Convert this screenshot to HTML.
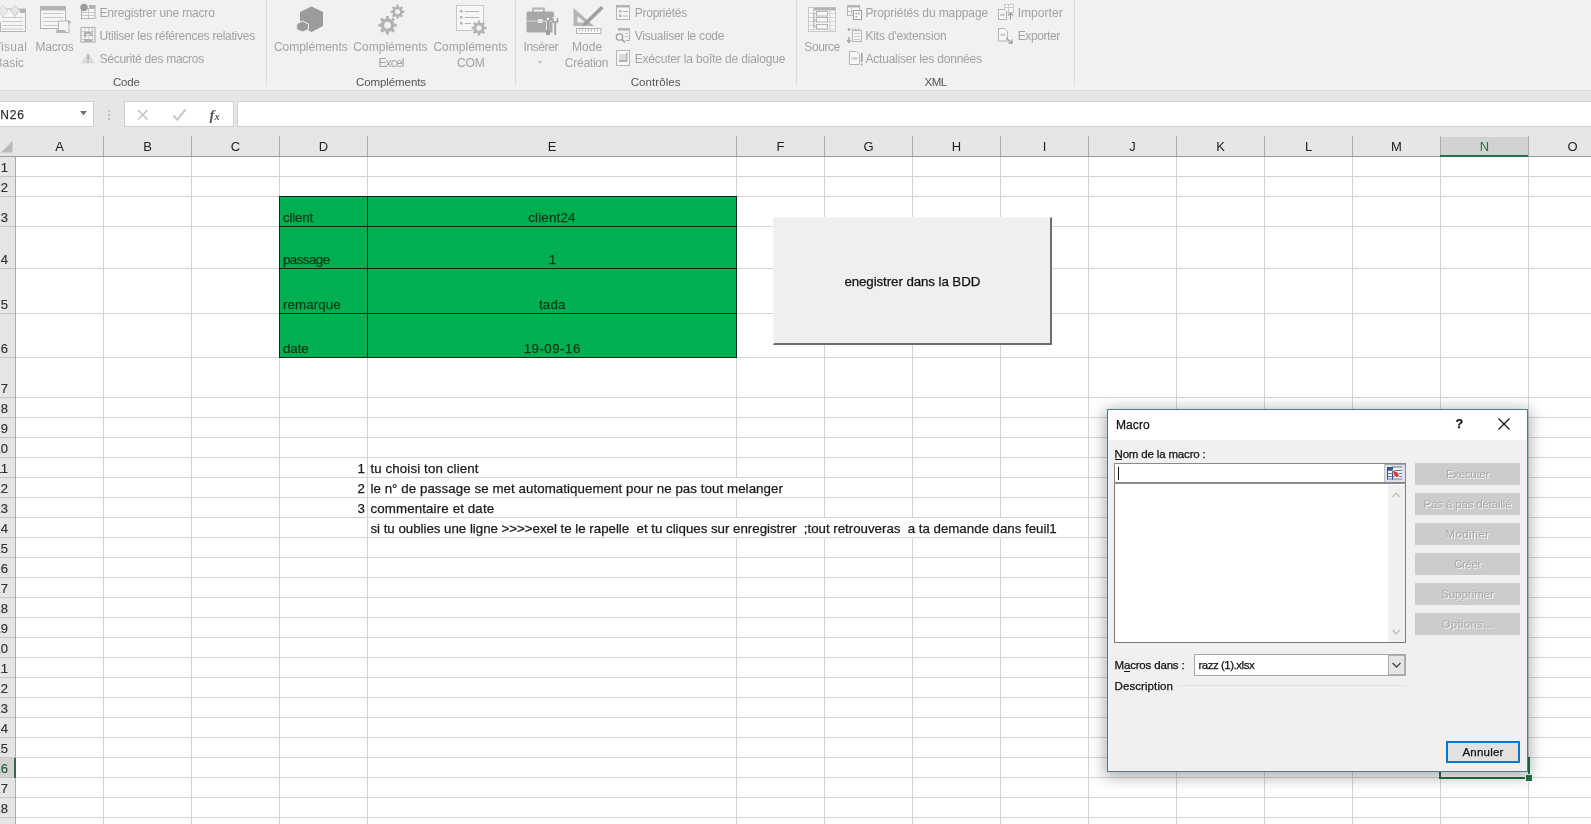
<!DOCTYPE html>
<html lang="fr"><head><meta charset="utf-8"><title>Macro</title>
<style>
html,body{margin:0;padding:0}
body{will-change:transform;width:1591px;height:824px;overflow:hidden;background:#fff;position:relative;font-family:"Liberation Sans",sans-serif;}
.abs{position:absolute}
#ribbon{left:0;top:0;width:1591px;height:90px;background:#f1f1f1}
#ribline{left:0;top:90px;width:1591px;height:1px;background:#d9d9d9}
#fbar{left:0;top:91px;width:1591px;height:66px;background:#e6e6e6}
.t{position:absolute;white-space:nowrap;color:#111}
.rt{position:absolute;color:#a3a3a3;font-size:12px;white-space:nowrap;line-height:14px}
.gl{position:absolute;color:#666;font-size:11px;white-space:nowrap;line-height:13px;transform:translateX(-50%)}
.big{position:absolute;color:#a3a3a3;font-size:12px;white-space:nowrap;line-height:16px;text-align:center;transform:translateX(-50%)}
.sep{position:absolute;top:0px;width:1px;height:86px;background:#dcdcdc}
.ch{position:absolute;top:137px;height:19px;line-height:19px;font-size:13px;color:#222;text-align:center}
.rh{position:absolute;left:0;width:15px;font-size:13px;color:#333;text-align:right;overflow:hidden}
.rh span{position:absolute;right:7px;bottom:2px;line-height:15px;-webkit-text-stroke:0.2px #333}
.ct{position:absolute;font-size:13px;color:#111;white-space:nowrap;line-height:20px;background:#fff}
.gt{position:absolute;font-size:13.5px;color:#0a3d1d;white-space:nowrap;line-height:16px}
.dbtn{position:absolute;left:1415px;width:105px;height:21px;background:#cccccc;color:#e4e4e4;text-shadow:1px 1px 0 #fafafa;font-size:12px;line-height:21px;text-align:center;color:#b0b0b0}
.dl{position:absolute;font-size:12px;color:#111;white-space:nowrap;line-height:14px}
</style></head><body>

<div id="ribbon" class="abs"></div><div id="ribline" class="abs"></div><div id="fbar" class="abs"></div>
<svg class="abs" style="left:0;top:0" width="1100" height="90"><rect x="-2" y="9" width="27.5" height="22.5" fill="#f6f6f6" stroke="#b4b4b4" stroke-width="1"/><rect x="20" y="9" width="5.5" height="4" fill="#b4b4b4"/><rect x="2" y="17" width="21" height="1" fill="#c8c8c8"/><rect x="2" y="21" width="21" height="1" fill="#c8c8c8"/><rect x="2" y="25" width="21" height="1" fill="#c8c8c8"/><rect x="2" y="28.5" width="21" height="1" fill="#c8c8c8"/><rect x="-1" y="22" width="2" height="9" fill="#b4b4b4"/><polygon points="10.5,10 15,5.5 19.5,10 15,16.5" fill="#e4e4e4" stroke="#c8c8c8" stroke-width="1"/><polygon points="-2,11 3,5 8,11 3,17" fill="#e9e9e9" stroke="#d8d8d8" stroke-width="1"/><rect x="40.5" y="6.5" width="25" height="22" fill="#f6f6f6" stroke="#b4b4b4" stroke-width="1"/><rect x="40" y="6" width="26" height="4.5" fill="#b4b4b4"/><rect x="43" y="13" width="20" height="1" fill="#c8c8c8"/><rect x="43" y="17" width="20" height="1" fill="#c8c8c8"/><rect x="43" y="21" width="20" height="1" fill="#c8c8c8"/><rect x="43" y="25" width="20" height="1" fill="#c8c8c8"/><path d="M58.5,21 h10.5 v11.5 h-12 v-2.5 h1.5 z" fill="#f4f4f4" stroke="#b4b4b4" stroke-width="1"/><rect x="56.5" y="30" width="9" height="3" fill="#b4b4b4"/><rect x="68" y="20.5" width="2.5" height="3" fill="#b4b4b4"/><rect x="81.5" y="8.5" width="13.5" height="10" fill="#f6f6f6" stroke="#b4b4b4" stroke-width="1"/><rect x="89" y="5" width="6.5" height="3" fill="#b4b4b4"/><rect x="82" y="12" width="13" height="1" fill="#c8c8c8"/><rect x="82" y="15" width="13" height="1" fill="#c8c8c8"/><rect x="88" y="9" width="1" height="9" fill="#c8c8c8"/><circle cx="84" cy="7.5" r="3.7" fill="#9e9e9e"/><rect x="81" y="27.5" width="14" height="14.5" fill="#f6f6f6" stroke="#b4b4b4" stroke-width="1.2"/><rect x="84.5" y="28" width="1" height="14" fill="#c8c8c8"/><rect x="88.5" y="28" width="1" height="14" fill="#c8c8c8"/><rect x="92" y="28" width="1" height="14" fill="#c8c8c8"/><rect x="81" y="31" width="14" height="1" fill="#c8c8c8"/><rect x="81" y="35" width="14" height="1" fill="#c8c8c8"/><rect x="81" y="39" width="14" height="1" fill="#c8c8c8"/><path d="M85,37 v-4 h6 v3" fill="none" stroke="#9e9e9e" stroke-width="1.3"/><rect x="84" y="39" width="8" height="3" fill="#b4b4b4"/><polygon points="88,52 95,63.5 81,63.5" fill="#dcdcdc"/><rect x="87.3" y="55" width="1.5" height="5" fill="#a8a8a8"/><rect x="87.3" y="61" width="1.5" height="1.5" fill="#a8a8a8"/><polygon points="311.5,6.5 323,12 323,26 311.5,32 300,26 300,12" fill="#9b9b9b"/><polygon points="302.5,21 308.5,24 308.5,29.5 302.5,32 296.7,29.5 296.7,24" fill="#9b9b9b" stroke="#f1f1f1" stroke-width="1"/><polygon points="396.71,23.89 396.71,26.51 393.99,26.87 393.26,28.61 394.94,30.78 393.08,32.64 390.91,30.96 389.17,31.69 388.81,34.41 386.19,34.41 385.83,31.69 384.09,30.96 381.92,32.64 380.06,30.78 381.74,28.61 381.01,26.87 378.29,26.51 378.29,23.89 381.01,23.53 381.74,21.79 380.06,19.62 381.92,17.76 384.09,19.44 385.83,18.71 386.19,15.99 388.81,15.99 389.17,18.71 390.91,19.44 393.08,17.76 394.94,19.62 393.26,21.79 393.99,23.53" fill="#b3b3b3"/><circle cx="387.5" cy="25.2" r="3.35" fill="#f1f1f1"/><polygon points="404.43,10.81 404.43,12.79 402.38,13.05 401.84,14.37 403.10,16.00 401.70,17.40 400.07,16.14 398.75,16.68 398.49,18.73 396.51,18.73 396.25,16.68 394.93,16.14 393.30,17.40 391.90,16.00 393.16,14.37 392.62,13.05 390.57,12.79 390.57,10.81 392.62,10.55 393.16,9.23 391.90,7.60 393.30,6.20 394.93,7.46 396.25,6.92 396.51,4.87 398.49,4.87 398.75,6.92 400.07,7.46 401.70,6.20 403.10,7.60 401.84,9.23 402.38,10.55" fill="#b3b3b3"/><circle cx="397.5" cy="11.8" r="2.52" fill="#f1f1f1"/><rect x="456.5" y="5.5" width="27" height="25" fill="#f7f7f7" stroke="#c8c8c8" stroke-width="1"/><rect x="460" y="10" width="2.5" height="2.5" fill="#b4b4b4"/><rect x="465" y="11" width="14" height="1" fill="#b4b4b4"/><rect x="460" y="16" width="2.5" height="2.5" fill="#b4b4b4"/><rect x="465" y="17" width="14" height="1" fill="#b4b4b4"/><rect x="460" y="22" width="2.5" height="2.5" fill="#b4b4b4"/><rect x="465" y="23" width="6" height="1" fill="#b4b4b4"/><polygon points="486.43,26.94 486.43,29.06 484.23,29.34 483.65,30.75 485.00,32.50 483.50,34.00 481.75,32.65 480.34,33.23 480.06,35.43 477.94,35.43 477.66,33.23 476.25,32.65 474.50,34.00 473.00,32.50 474.35,30.75 473.77,29.34 471.57,29.06 471.57,26.94 473.77,26.66 474.35,25.25 473.00,23.50 474.50,22.00 476.25,23.35 477.66,22.77 477.94,20.57 480.06,20.57 480.34,22.77 481.75,23.35 483.50,22.00 485.00,23.50 483.65,25.25 484.23,26.66" fill="#b3b3b3"/><circle cx="479" cy="28" r="2.70" fill="#f1f1f1"/><path d="M533,12 v-3.5 h11 v3.5" fill="none" stroke="#b4b4b4" stroke-width="1.8"/><rect x="526.5" y="11.5" width="27.5" height="21" rx="1.5" fill="#a8a8a8"/><rect x="526.5" y="20.5" width="27.5" height="1.2" fill="#d0d0d0"/><rect x="538" y="19" width="4.5" height="4" fill="#e8e8e8"/><rect x="546.2" y="18" width="3" height="17" fill="#f1f1f1"/><rect x="547" y="21" width="2" height="9" fill="#9e9e9e"/><rect x="546" y="30" width="4" height="5" fill="#9e9e9e"/><path d="M545,18 l3,4 l3,-4" fill="none" stroke="#9e9e9e" stroke-width="1.3"/><rect x="552.5" y="17" width="5" height="19" fill="#f1f1f1"/><rect x="554.3" y="22" width="1.8" height="13" fill="#9e9e9e"/><path d="M553,18 v4 h4.5 v-4" fill="none" stroke="#9e9e9e" stroke-width="1.4"/><polygon points="537.5,61 542.5,61 540,64" fill="#c4c4c4"/><path d="M573.5,8 V26 H594 Z M577.5,16 V22.5 H585 Z" fill="#b4b4b4" fill-rule="evenodd"/><path d="M601,6 l2.5,2.5 l-17,16.5 l-4,1.5 l1.5,-4 z" fill="#9e9e9e"/><rect x="576.5" y="28.5" width="24.5" height="5" fill="#f8f8f8" stroke="#b4b4b4" stroke-width="1"/><rect x="579" y="29" width="1" height="2.5" fill="#b4b4b4"/><rect x="582" y="29" width="1" height="2.5" fill="#b4b4b4"/><rect x="585" y="29" width="1" height="2.5" fill="#b4b4b4"/><rect x="588" y="29" width="1" height="2.5" fill="#b4b4b4"/><rect x="591" y="29" width="1" height="2.5" fill="#b4b4b4"/><rect x="594" y="29" width="1" height="2.5" fill="#b4b4b4"/><rect x="597" y="29" width="1" height="2.5" fill="#b4b4b4"/><rect x="616.5" y="5.5" width="13" height="14" fill="#f7f7f7" stroke="#b4b4b4" stroke-width="1"/><rect x="616" y="5" width="14" height="2.5" fill="#b4b4b4"/><rect x="619" y="10" width="2.5" height="2.5" fill="#b4b4b4"/><rect x="623" y="11" width="5" height="1" fill="#b4b4b4"/><rect x="619" y="14.5" width="2.5" height="2.5" fill="#b4b4b4"/><rect x="623" y="15.5" width="5" height="1" fill="#b4b4b4"/><path d="M618,28.5 h11.5 v12 h-4" fill="none" stroke="#b4b4b4" stroke-width="1"/><rect x="618" y="28" width="12" height="2.5" fill="#b4b4b4"/><circle cx="619.5" cy="37" r="3.2" fill="#f4f4f4" stroke="#9e9e9e" stroke-width="1.3"/><path d="M622,39.5 l3,3" stroke="#9e9e9e" stroke-width="1.6"/><rect x="625" y="33" width="3" height="1" fill="#c8c8c8"/><rect x="625" y="36" width="3" height="1" fill="#c8c8c8"/><rect x="616.5" y="50.5" width="13" height="15" fill="#f7f7f7" stroke="#b4b4b4" stroke-width="1"/><rect x="619" y="54" width="7" height="8" fill="#d9d9d9"/><rect x="619" y="60" width="7" height="2" fill="#b4b4b4"/><rect x="626" y="53" width="1.5" height="9" fill="#b4b4b4"/><rect x="808.5" y="7.5" width="27" height="24" fill="#f7f7f7" stroke="#c8c8c8" stroke-width="1"/><rect x="813" y="7.5" width="22.5" height="3" fill="#b4b4b4"/><rect x="813" y="8" width="1" height="23.5" fill="#c8c8c8"/><rect x="829.5" y="8" width="1" height="23.5" fill="#c8c8c8"/><rect x="809" y="13" width="26.5" height="1" fill="#d6d6d6"/><rect x="809" y="17" width="26.5" height="1" fill="#d6d6d6"/><rect x="809" y="21" width="26.5" height="1" fill="#d6d6d6"/><rect x="809" y="25" width="26.5" height="1" fill="#d6d6d6"/><rect x="809" y="29" width="26.5" height="1" fill="#d6d6d6"/><rect x="816.5" y="11.5" width="11" height="4.5" fill="#f7f7f7" stroke="#b4b4b4" stroke-width="1"/><rect x="816.5" y="17.5" width="11" height="4.5" fill="#f7f7f7" stroke="#b4b4b4" stroke-width="1"/><rect x="816.5" y="24.5" width="11" height="4.5" fill="#f7f7f7" stroke="#b4b4b4" stroke-width="1"/><path d="M814,13.5 h2.5 M814,13.5 v13.5 h2.5 M814,20 h2.5" fill="none" stroke="#b4b4b4" stroke-width="1"/><rect x="847.5" y="5.5" width="12" height="10" fill="#f7f7f7" stroke="#b4b4b4" stroke-width="1"/><rect x="847" y="5" width="13" height="2.5" fill="#b4b4b4"/><rect x="851" y="8" width="1" height="8" fill="#c8c8c8"/><rect x="848" y="11" width="11" height="1" fill="#c8c8c8"/><rect x="853.5" y="10.5" width="8" height="9" fill="#f7f7f7" stroke="#9e9e9e" stroke-width="1"/><rect x="855.5" y="13" width="1.5" height="1.5" fill="#9e9e9e"/><rect x="858" y="13" width="1.5" height="1.5" fill="#9e9e9e"/><rect x="855.5" y="16" width="1.5" height="1.5" fill="#9e9e9e"/><rect x="852.5" y="30.5" width="9" height="11" fill="#f7f7f7" stroke="#b4b4b4" stroke-width="1"/><rect x="854" y="33" width="6" height="1" fill="#c8c8c8"/><rect x="854" y="36" width="6" height="1" fill="#c8c8c8"/><rect x="854" y="39" width="6" height="1" fill="#c8c8c8"/><path d="M849,28 v3 M847.5,29.5 h3 M849,37 v5 M847,40 l2,2.5 l2,-2.5" fill="none" stroke="#9e9e9e" stroke-width="1.2"/><rect x="852" y="28.5" width="1.5" height="1.5" fill="#b4b4b4"/><rect x="855" y="28.5" width="1.5" height="1.5" fill="#b4b4b4"/><rect x="858" y="28.5" width="1.5" height="1.5" fill="#b4b4b4"/><path d="M849.5,51.5 h7 l3,3 v10 h-10 z" fill="#f7f7f7" stroke="#b4b4b4" stroke-width="1"/><rect x="851.5" y="57" width="6" height="3" fill="#d4d4d4"/><rect x="861" y="53" width="1.6" height="9" fill="#9e9e9e"/><rect x="861" y="63.5" width="1.6" height="1.8" fill="#9e9e9e"/><rect x="1004.5" y="4.500" width="9" height="8" fill="#f7f7f7" stroke="#c8c8c8" stroke-width="1"/><rect x="1005" y="7" width="8" height="1" fill="#c8c8c8"/><rect x="1008" y="5" width="1" height="7" fill="#c8c8c8"/><path d="M998.5,9.500 h6 l2,2 v8 h-8 z" fill="#f7f7f7" stroke="#b4b4b4" stroke-width="1"/><rect x="1000" y="13.5" width="5" height="2.500" fill="#cfcfcf"/><path d="M1010.5,19.5 v-6 M1008,15.500 l2.5,-2.500 l2.500,2.500" fill="none" stroke="#9e9e9e" stroke-width="1.200"/><path d="M998.5,28.5 h6 l3,3 v9.500 h-9 z" fill="#f7f7f7" stroke="#b4b4b4" stroke-width="1"/><rect x="1000.5" y="33.5" width="5" height="2.500" fill="#cfcfcf"/><path d="M1006,38 l5.500,4.500 M1008.500,43 h3.500 v-3.500" fill="none" stroke="#9e9e9e" stroke-width="1.300"/></svg><div class="sep" style="left:266px"></div><div class="sep" style="left:515px"></div><div class="sep" style="left:796px"></div><div class="sep" style="left:1074px"></div><div class="t" style="left:-7.0px;top:38px;font-size:12px;line-height:18px;letter-spacing:0.289px;color:#a2a2a2;">Visual</div><div class="t" style="left:-5.5px;top:54px;font-size:12px;line-height:18px;letter-spacing:-0.009px;color:#a2a2a2;">Basic</div><div class="t" style="left:35.6px;top:38px;font-size:12px;line-height:18px;letter-spacing:-0.224px;color:#a2a2a2;">Macros</div><div class="t" style="left:99.5px;top:4px;font-size:12px;line-height:18px;letter-spacing:-0.168px;color:#a2a2a2;">Enregistrer une macro</div><div class="t" style="left:99.5px;top:27px;font-size:12px;line-height:18px;letter-spacing:-0.239px;color:#a2a2a2;">Utiliser les références relatives</div><div class="t" style="left:99.5px;top:50px;font-size:12px;line-height:18px;letter-spacing:-0.257px;color:#a2a2a2;">Sécurité des macros</div><div class="t" style="left:112.9px;top:74px;font-size:11.5px;line-height:16px;letter-spacing:-0.125px;color:#555;">Code</div><div class="t" style="left:273.9px;top:38px;font-size:12px;line-height:18px;letter-spacing:-0.012px;color:#a2a2a2;">Compléments</div><div class="t" style="left:353.3px;top:38px;font-size:12px;line-height:18px;letter-spacing:0.024px;color:#a2a2a2;">Compléments</div><div class="t" style="left:433.4px;top:38px;font-size:12px;line-height:18px;letter-spacing:0.015px;color:#a2a2a2;">Compléments</div><div class="t" style="left:378.4px;top:54px;font-size:12px;line-height:18px;letter-spacing:-0.829px;color:#a2a2a2;">Excel</div><div class="t" style="left:457.0px;top:54px;font-size:12px;line-height:18px;letter-spacing:-0.167px;color:#a2a2a2;">COM</div><div class="t" style="left:356.0px;top:74px;font-size:11.5px;line-height:16px;letter-spacing:-0.087px;color:#555;">Compléments</div><div class="t" style="left:523.6px;top:38px;font-size:12px;line-height:18px;letter-spacing:-0.423px;color:#a2a2a2;">Insérer</div><div class="t" style="left:572.0px;top:38px;font-size:12px;line-height:18px;letter-spacing:0.042px;color:#a2a2a2;">Mode</div><div class="t" style="left:564.8px;top:54px;font-size:12px;line-height:18px;letter-spacing:-0.245px;color:#a2a2a2;">Création</div><div class="t" style="left:634.7px;top:4px;font-size:12px;line-height:18px;letter-spacing:-0.240px;color:#a2a2a2;">Propriétés</div><div class="t" style="left:634.7px;top:27px;font-size:12px;line-height:18px;letter-spacing:-0.241px;color:#a2a2a2;">Visualiser le code</div><div class="t" style="left:634.7px;top:50px;font-size:12px;line-height:18px;letter-spacing:-0.171px;color:#a2a2a2;">Exécuter la boîte de dialogue</div><div class="t" style="left:630.7px;top:74px;font-size:11.5px;line-height:16px;letter-spacing:0.087px;color:#555;">Contrôles</div><div class="t" style="left:804.3px;top:38px;font-size:12px;line-height:18px;letter-spacing:-0.422px;color:#a2a2a2;">Source</div><div class="t" style="left:865.4px;top:4px;font-size:12px;line-height:18px;letter-spacing:-0.098px;color:#a2a2a2;">Propriétés du mappage</div><div class="t" style="left:865.4px;top:27px;font-size:12px;line-height:18px;letter-spacing:-0.167px;color:#a2a2a2;">Kits d&#x27;extension</div><div class="t" style="left:865.4px;top:50px;font-size:12px;line-height:18px;letter-spacing:-0.193px;color:#a2a2a2;">Actualiser les données</div><div class="t" style="left:1017.7px;top:4px;font-size:12px;line-height:18px;letter-spacing:0.052px;color:#a2a2a2;">Importer</div><div class="t" style="left:1017.7px;top:27px;font-size:12px;line-height:18px;letter-spacing:-0.407px;color:#a2a2a2;">Exporter</div><div class="t" style="left:924.6px;top:74px;font-size:11.5px;line-height:16px;letter-spacing:-0.552px;color:#555;">XML</div>
<div class="abs" style="left:-1px;top:101px;width:95px;height:26px;background:#fff;border:1px solid #cfcfcf;box-sizing:border-box"></div><div class="abs" style="left:124px;top:101px;width:110px;height:26px;background:#fff;border:1px solid #cfcfcf;box-sizing:border-box"></div><div class="abs" style="left:237px;top:101px;width:1360px;height:26px;background:#fff;border:1px solid #cfcfcf;box-sizing:border-box"></div><div class="t" style="left:0.3px;top:106px;font-size:12px;line-height:18px;letter-spacing:0.761px;color:#333;-webkit-text-stroke:0.25px #333;">N26</div><svg class="abs" style="left:0;top:95px" width="250" height="40"><polygon points="80,16 87,16 83.5,20.300" fill="#6f6f6f"/><rect x="108.300" y="15.3" width="1.800" height="1.800" fill="#b3b3b3"/><rect x="108.300" y="19.2" width="1.800" height="1.800" fill="#b3b3b3"/><rect x="108.300" y="23.1" width="1.800" height="1.800" fill="#b3b3b3"/><path d="M138,15 l9.500,9.500 M147.500,15 l-9.500,9.500" stroke="#c3c3c3" stroke-width="1.600" fill="none"/><path d="M173.500,20.500 l3.800,4.200 l8.200,-10.200" stroke="#c9c9c9" stroke-width="2" fill="none"/><text x="209.500" y="24.500" font-family="'Liberation Serif',serif" font-style="italic" font-weight="bold" font-size="15" fill="#595959">f</text><text x="214.500" y="24.500" font-family="'Liberation Serif',serif" font-style="italic" font-weight="bold" font-size="10.500" fill="#595959">x</text></svg>
<div class="abs" style="left:0;top:156px;width:1591px;height:668px;background:#fff"></div>
<svg class="abs" style="left:0;top:0" width="1591" height="824" shape-rendering="crispEdges"><rect x="103" y="157" width="1" height="667" fill="#d4d4d4"/><rect x="191" y="157" width="1" height="667" fill="#d4d4d4"/><rect x="279" y="157" width="1" height="667" fill="#d4d4d4"/><rect x="367" y="157" width="1" height="667" fill="#d4d4d4"/><rect x="736" y="157" width="1" height="667" fill="#d4d4d4"/><rect x="824" y="157" width="1" height="667" fill="#d4d4d4"/><rect x="912" y="157" width="1" height="667" fill="#d4d4d4"/><rect x="1000" y="157" width="1" height="667" fill="#d4d4d4"/><rect x="1088" y="157" width="1" height="667" fill="#d4d4d4"/><rect x="1176" y="157" width="1" height="667" fill="#d4d4d4"/><rect x="1264" y="157" width="1" height="667" fill="#d4d4d4"/><rect x="1352" y="157" width="1" height="667" fill="#d4d4d4"/><rect x="1440" y="157" width="1" height="667" fill="#d4d4d4"/><rect x="1528" y="157" width="1" height="667" fill="#d4d4d4"/><rect x="1616" y="157" width="1" height="667" fill="#d4d4d4"/><rect x="15" y="176" width="1576" height="1" fill="#d4d4d4"/><rect x="15" y="196" width="1576" height="1" fill="#d4d4d4"/><rect x="15" y="226" width="1576" height="1" fill="#d4d4d4"/><rect x="15" y="268" width="1576" height="1" fill="#d4d4d4"/><rect x="15" y="313" width="1576" height="1" fill="#d4d4d4"/><rect x="15" y="357" width="1576" height="1" fill="#d4d4d4"/><rect x="15" y="397" width="1576" height="1" fill="#d4d4d4"/><rect x="15" y="417" width="1576" height="1" fill="#d4d4d4"/><rect x="15" y="437" width="1576" height="1" fill="#d4d4d4"/><rect x="15" y="457" width="1576" height="1" fill="#d4d4d4"/><rect x="15" y="477" width="1576" height="1" fill="#d4d4d4"/><rect x="15" y="497" width="1576" height="1" fill="#d4d4d4"/><rect x="15" y="517" width="1576" height="1" fill="#d4d4d4"/><rect x="15" y="537" width="1576" height="1" fill="#d4d4d4"/><rect x="15" y="557" width="1576" height="1" fill="#d4d4d4"/><rect x="15" y="577" width="1576" height="1" fill="#d4d4d4"/><rect x="15" y="597" width="1576" height="1" fill="#d4d4d4"/><rect x="15" y="617" width="1576" height="1" fill="#d4d4d4"/><rect x="15" y="637" width="1576" height="1" fill="#d4d4d4"/><rect x="15" y="657" width="1576" height="1" fill="#d4d4d4"/><rect x="15" y="677" width="1576" height="1" fill="#d4d4d4"/><rect x="15" y="697" width="1576" height="1" fill="#d4d4d4"/><rect x="15" y="717" width="1576" height="1" fill="#d4d4d4"/><rect x="15" y="737" width="1576" height="1" fill="#d4d4d4"/><rect x="15" y="757" width="1576" height="1" fill="#d4d4d4"/><rect x="15" y="777" width="1576" height="1" fill="#d4d4d4"/><rect x="15" y="797" width="1576" height="1" fill="#d4d4d4"/><rect x="15" y="817" width="1576" height="1" fill="#d4d4d4"/><rect x="15" y="837" width="1576" height="1" fill="#d4d4d4"/></svg>
<div class="ch" style="left:16px;width:87px;">A</div><div class="abs" style="left:103px;top:136px;width:1px;height:20px;background:#ababab"></div><div class="ch" style="left:104px;width:87px;">B</div><div class="abs" style="left:191px;top:136px;width:1px;height:20px;background:#ababab"></div><div class="ch" style="left:192px;width:87px;">C</div><div class="abs" style="left:279px;top:136px;width:1px;height:20px;background:#ababab"></div><div class="ch" style="left:280px;width:87px;">D</div><div class="abs" style="left:367px;top:136px;width:1px;height:20px;background:#ababab"></div><div class="ch" style="left:368px;width:368px;">E</div><div class="abs" style="left:736px;top:136px;width:1px;height:20px;background:#ababab"></div><div class="ch" style="left:737px;width:87px;">F</div><div class="abs" style="left:824px;top:136px;width:1px;height:20px;background:#ababab"></div><div class="ch" style="left:825px;width:87px;">G</div><div class="abs" style="left:912px;top:136px;width:1px;height:20px;background:#ababab"></div><div class="ch" style="left:913px;width:87px;">H</div><div class="abs" style="left:1000px;top:136px;width:1px;height:20px;background:#ababab"></div><div class="ch" style="left:1001px;width:87px;">I</div><div class="abs" style="left:1088px;top:136px;width:1px;height:20px;background:#ababab"></div><div class="ch" style="left:1089px;width:87px;">J</div><div class="abs" style="left:1176px;top:136px;width:1px;height:20px;background:#ababab"></div><div class="ch" style="left:1177px;width:87px;">K</div><div class="abs" style="left:1264px;top:136px;width:1px;height:20px;background:#ababab"></div><div class="ch" style="left:1265px;width:87px;">L</div><div class="abs" style="left:1352px;top:136px;width:1px;height:20px;background:#ababab"></div><div class="ch" style="left:1353px;width:87px;">M</div><div class="abs" style="left:1440px;top:136px;width:1px;height:20px;background:#ababab"></div><div class="abs" style="left:1441px;top:137px;width:88px;height:19px;background:#d2d2d2;border-bottom:2px solid #217346;box-sizing:content-box;height:18px"></div><div class="ch" style="left:1441px;width:87px;color:#217346">N</div><div class="abs" style="left:1528px;top:136px;width:1px;height:20px;background:#ababab"></div><div class="ch" style="left:1529px;width:87px;">O</div><div class="abs" style="left:1616px;top:136px;width:1px;height:20px;background:#ababab"></div>
<div class="abs" style="left:0;top:156px;width:1591px;height:1px;background:#9e9e9e"></div>
<div class="abs" style="left:1440px;top:155px;width:88px;height:2px;background:#217346"></div>
<div class="abs" style="left:0;top:157px;width:15px;height:667px;background:#e6e6e6;border-right:1px solid #ababab"></div><div class="rh" style="top:157px;height:20px;"><span>1</span></div><div class="abs" style="left:0;top:176px;width:15px;height:1px;background:#c4c4c4"></div><div class="rh" style="top:177px;height:20px;"><span>2</span></div><div class="abs" style="left:0;top:196px;width:15px;height:1px;background:#c4c4c4"></div><div class="rh" style="top:197px;height:30px;"><span>3</span></div><div class="abs" style="left:0;top:226px;width:15px;height:1px;background:#c4c4c4"></div><div class="rh" style="top:227px;height:42px;"><span>4</span></div><div class="abs" style="left:0;top:268px;width:15px;height:1px;background:#c4c4c4"></div><div class="rh" style="top:269px;height:45px;"><span>5</span></div><div class="abs" style="left:0;top:313px;width:15px;height:1px;background:#c4c4c4"></div><div class="rh" style="top:314px;height:44px;"><span>6</span></div><div class="abs" style="left:0;top:357px;width:15px;height:1px;background:#c4c4c4"></div><div class="rh" style="top:358px;height:40px;"><span>7</span></div><div class="abs" style="left:0;top:397px;width:15px;height:1px;background:#c4c4c4"></div><div class="rh" style="top:398px;height:20px;"><span>8</span></div><div class="abs" style="left:0;top:417px;width:15px;height:1px;background:#c4c4c4"></div><div class="rh" style="top:418px;height:20px;"><span>9</span></div><div class="abs" style="left:0;top:437px;width:15px;height:1px;background:#c4c4c4"></div><div class="rh" style="top:438px;height:20px;"><span>10</span></div><div class="abs" style="left:0;top:457px;width:15px;height:1px;background:#c4c4c4"></div><div class="rh" style="top:458px;height:20px;"><span>11</span></div><div class="abs" style="left:0;top:477px;width:15px;height:1px;background:#c4c4c4"></div><div class="rh" style="top:478px;height:20px;"><span>12</span></div><div class="abs" style="left:0;top:497px;width:15px;height:1px;background:#c4c4c4"></div><div class="rh" style="top:498px;height:20px;"><span>13</span></div><div class="abs" style="left:0;top:517px;width:15px;height:1px;background:#c4c4c4"></div><div class="rh" style="top:518px;height:20px;"><span>14</span></div><div class="abs" style="left:0;top:537px;width:15px;height:1px;background:#c4c4c4"></div><div class="rh" style="top:538px;height:20px;"><span>15</span></div><div class="abs" style="left:0;top:557px;width:15px;height:1px;background:#c4c4c4"></div><div class="rh" style="top:558px;height:20px;"><span>16</span></div><div class="abs" style="left:0;top:577px;width:15px;height:1px;background:#c4c4c4"></div><div class="rh" style="top:578px;height:20px;"><span>17</span></div><div class="abs" style="left:0;top:597px;width:15px;height:1px;background:#c4c4c4"></div><div class="rh" style="top:598px;height:20px;"><span>18</span></div><div class="abs" style="left:0;top:617px;width:15px;height:1px;background:#c4c4c4"></div><div class="rh" style="top:618px;height:20px;"><span>19</span></div><div class="abs" style="left:0;top:637px;width:15px;height:1px;background:#c4c4c4"></div><div class="rh" style="top:638px;height:20px;"><span>20</span></div><div class="abs" style="left:0;top:657px;width:15px;height:1px;background:#c4c4c4"></div><div class="rh" style="top:658px;height:20px;"><span>21</span></div><div class="abs" style="left:0;top:677px;width:15px;height:1px;background:#c4c4c4"></div><div class="rh" style="top:678px;height:20px;"><span>22</span></div><div class="abs" style="left:0;top:697px;width:15px;height:1px;background:#c4c4c4"></div><div class="rh" style="top:698px;height:20px;"><span>23</span></div><div class="abs" style="left:0;top:717px;width:15px;height:1px;background:#c4c4c4"></div><div class="rh" style="top:718px;height:20px;"><span>24</span></div><div class="abs" style="left:0;top:737px;width:15px;height:1px;background:#c4c4c4"></div><div class="rh" style="top:738px;height:20px;"><span>25</span></div><div class="abs" style="left:0;top:757px;width:15px;height:1px;background:#c4c4c4"></div><div class="rh" style="top:758px;height:20px;background:#d2d2d2;color:#217346;"><span>26</span></div><div class="abs" style="left:0;top:777px;width:15px;height:1px;background:#c4c4c4"></div><div class="rh" style="top:778px;height:20px;"><span>27</span></div><div class="abs" style="left:0;top:797px;width:15px;height:1px;background:#c4c4c4"></div><div class="rh" style="top:798px;height:20px;"><span>28</span></div><div class="abs" style="left:0;top:817px;width:15px;height:1px;background:#c4c4c4"></div><div class="rh" style="top:818px;height:20px;"><span>29</span></div><div class="abs" style="left:0;top:837px;width:15px;height:1px;background:#c4c4c4"></div>
<div class="abs" style="left:14px;top:758px;width:2px;height:20px;background:#217346"></div>
<svg class="abs" style="left:0;top:136px" width="16" height="20"><polygon points="12.5,5 12.5,16.5 1,16.5" fill="#b9b9b9"/></svg>
<div class="abs" style="left:279px;top:196px;width:458px;height:162px;background:#00b050"></div><div class="abs" style="left:279px;top:196px;width:458px;height:1px;background:#0c2a16"></div><div class="abs" style="left:279px;top:226px;width:458px;height:1px;background:#0c2a16"></div><div class="abs" style="left:279px;top:268px;width:458px;height:1px;background:#0c2a16"></div><div class="abs" style="left:279px;top:313px;width:458px;height:1px;background:#0c2a16"></div><div class="abs" style="left:279px;top:357px;width:458px;height:1px;background:#0c2a16"></div><div class="abs" style="left:279px;top:196px;width:1px;height:162px;background:#0c2a16"></div><div class="abs" style="left:367px;top:196px;width:1px;height:162px;background:#0c2a16"></div><div class="abs" style="left:736px;top:196px;width:1px;height:162px;background:#0c2a16"></div><div class="t" style="left:283.0px;top:208px;font-size:13.3px;line-height:19px;letter-spacing:-0.174px;color:#083a1b;-webkit-text-stroke:0.25px #083a1b;">client</div><div class="t" style="left:283.0px;top:250px;font-size:13.3px;line-height:19px;letter-spacing:-0.540px;color:#083a1b;-webkit-text-stroke:0.25px #083a1b;">passage</div><div class="t" style="left:283.0px;top:295px;font-size:13.3px;line-height:19px;letter-spacing:0.097px;color:#083a1b;-webkit-text-stroke:0.25px #083a1b;">remarque</div><div class="t" style="left:283.0px;top:339px;font-size:13.3px;line-height:19px;letter-spacing:-0.073px;color:#083a1b;-webkit-text-stroke:0.25px #083a1b;">date</div><div class="t" style="left:528.2px;top:208px;font-size:13.3px;line-height:19px;letter-spacing:0.207px;color:#083a1b;-webkit-text-stroke:0.25px #083a1b;">client24</div><div class="t" style="left:548.8px;top:250px;font-size:13.3px;line-height:19px;letter-spacing:-0.706px;color:#083a1b;-webkit-text-stroke:0.25px #083a1b;">1</div><div class="t" style="left:539.0px;top:295px;font-size:13.3px;line-height:19px;letter-spacing:0.152px;color:#083a1b;-webkit-text-stroke:0.25px #083a1b;">tada</div><div class="t" style="left:523.7px;top:339px;font-size:13.3px;line-height:19px;letter-spacing:0.483px;color:#083a1b;-webkit-text-stroke:0.25px #083a1b;">19-09-16</div><div class="abs" style="left:773px;top:217px;width:279px;height:128px;background:#efefef;box-sizing:border-box;border-right:2px solid #6e6e6e;border-bottom:2px solid #6e6e6e;border-top:1px solid #f6f6f6;border-left:1px solid #f6f6f6"></div><div class="t" style="left:844.4px;top:272px;font-size:13.3px;line-height:19px;letter-spacing:-0.076px;color:#111;-webkit-text-stroke:0.25px #111;">enegistrer dans la BDD</div><div class="t" style="left:357.5px;top:459px;font-size:13.3px;line-height:19px;letter-spacing:-0.906px;color:#1a1a1a;-webkit-text-stroke:0.25px #1a1a1a;">1</div><div class="t" style="left:357.5px;top:479px;font-size:13.3px;line-height:19px;letter-spacing:-0.906px;color:#1a1a1a;-webkit-text-stroke:0.25px #1a1a1a;">2</div><div class="t" style="left:357.5px;top:499px;font-size:13.3px;line-height:19px;letter-spacing:-0.906px;color:#1a1a1a;-webkit-text-stroke:0.25px #1a1a1a;">3</div><div class="t" style="left:370.4px;top:459px;font-size:13.3px;line-height:19px;letter-spacing:0.125px;color:#1a1a1a;-webkit-text-stroke:0.25px #1a1a1a;">tu choisi ton client</div><div class="abs" style="left:369px;top:478px;width:416px;height:19px;background:#fff"></div><div class="t" style="left:370.4px;top:479px;font-size:13.3px;line-height:19px;letter-spacing:0.068px;color:#1a1a1a;-webkit-text-stroke:0.25px #1a1a1a;">le n° de passage se met automatiquement pour ne pas tout melanger</div><div class="t" style="left:370.4px;top:499px;font-size:13.3px;line-height:19px;letter-spacing:0.141px;color:#1a1a1a;-webkit-text-stroke:0.25px #1a1a1a;">commentaire et date</div><div class="abs" style="left:369px;top:518px;width:690px;height:19px;background:#fff"></div><div class="t" style="left:370.4px;top:519px;font-size:13.3px;line-height:19px;letter-spacing:-0.015px;color:#1a1a1a;-webkit-text-stroke:0.25px #1a1a1a;white-space:pre;">si tu oublies une ligne &gt;&gt;&gt;&gt;exel te le rapelle  et tu cliques sur enregistrer  ;tout retrouveras  a ta demande dans feuil1</div><div class="abs" style="left:1439px;top:757px;width:91px;height:22px;border:2px solid #217346;box-sizing:border-box"></div><div class="abs" style="left:1526px;top:775px;width:6px;height:6px;background:#217346;border:1px solid #fff;box-sizing:content-box;margin:-1px"></div>
<div class="abs" style="left:1107px;top:409px;width:421px;height:363px;background:#f0f0f0;box-shadow:0 3px 14px 2px rgba(0,0,0,0.33);border:1px solid #4c7c8e;box-sizing:border-box"></div><div class="abs" style="left:1108px;top:410px;width:419px;height:30px;background:#fff"></div><div class="t" style="left:1116.0px;top:416px;font-size:12px;line-height:18px;letter-spacing:0.091px;color:#111;-webkit-text-stroke:0.25px #111;">Macro</div><div class="t" style="left:1455.5px;top:415px;font-size:12.5px;line-height:18px;letter-spacing:-1.641px;color:#111;font-weight:700;-webkit-text-stroke:0.25px #111;">?</div><svg class="abs" style="left:1496px;top:416px" width="16" height="16"><path d="M2.500,2.500 l11,11 M13.500,2.500 l-11,11" stroke="#111" stroke-width="1.200" fill="none"/></svg><div class="t" style="left:1114.5px;top:446px;font-size:11.5px;line-height:16px;letter-spacing:-0.168px;color:#111;-webkit-text-stroke:0.25px #111;">Nom de la macro :</div><div class="abs" style="left:1114.500px;top:459px;width:7.500px;height:1px;background:#111"></div><div class="abs" style="left:1114px;top:463px;width:292px;height:21px;background:#fff;border:1px solid #8a8a8a;border-bottom:2px solid #8a8a8a;box-sizing:border-box"></div><div class="abs" style="left:1118px;top:467px;width:1px;height:13px;background:#111"></div><svg class="abs" style="left:1384px;top:464px" width="21" height="18"><rect x="0" y="0" width="21" height="18" fill="#dde1ea"/><rect x="0" y="0" width="21" height="1" fill="#a9a9a9"/><rect x="0" y="0" width="1" height="19" fill="#c4c4c4"/><rect x="3" y="3" width="15" height="12.500" fill="#f3f6fc"/><rect x="3" y="3" width="5.500" height="3.200" fill="#3d4f86"/><path d="M3,6.500 h15 M3,9.500 h15 M3,12.500 h15 M3,15 h15 M8,3 h10" stroke="#5f74a8" stroke-width="1" fill="none"/><path d="M3.500,3 v12.500 M8.500,3 v12.500" stroke="#3d4f86" stroke-width="1" fill="none"/><polygon points="8.300,5.500 14.300,8 15.800,12.200 13,14.300 9.500,11.500" fill="#fbeeee"/><polygon points="9,6.500 13.800,8.800 14.800,12 12.800,13.300 10.200,11" fill="#cf3a28"/></svg><div class="abs" style="left:1114px;top:484px;width:292px;height:159px;background:#fff;border:1px solid #7a7a7a;border-top:none;box-sizing:border-box"></div><div class="abs" style="left:1388px;top:485px;width:17px;height:157px;background:#f0f0f0"></div><svg class="abs" style="left:1388px;top:485px" width="17" height="157"><path d="M4.500,12 l3.700,-3.700 l3.700,3.700" stroke="#c2c2c2" stroke-width="1.500" fill="none"/><path d="M4.500,145 l3.700,3.700 l3.700,-3.700" stroke="#c2c2c2" stroke-width="1.500" fill="none"/></svg><div class="abs" style="left:1415px;top:463px;width:105px;height:22px;background:#cccccc"></div><div class="t" style="left:1446.0px;top:466px;font-size:11.5px;line-height:16px;letter-spacing:-0.299px;color:#ababab;text-shadow:1px 1px 0 #f4f4f4;">Exécuter</div><div class="abs" style="left:1415px;top:493px;width:105px;height:22px;background:#cccccc"></div><div class="t" style="left:1423.5px;top:496px;font-size:11.5px;line-height:16px;letter-spacing:-0.155px;color:#ababab;text-shadow:1px 1px 0 #f4f4f4;">Pas à pas détaillé</div><div class="abs" style="left:1415px;top:523px;width:105px;height:22px;background:#cccccc"></div><div class="t" style="left:1445.5px;top:526px;font-size:11.5px;line-height:16px;letter-spacing:0.387px;color:#ababab;text-shadow:1px 1px 0 #f4f4f4;">Modifier</div><div class="abs" style="left:1415px;top:553px;width:105px;height:22px;background:#cccccc"></div><div class="t" style="left:1454.0px;top:556px;font-size:11.5px;line-height:16px;letter-spacing:-0.353px;color:#ababab;text-shadow:1px 1px 0 #f4f4f4;">Créer</div><div class="abs" style="left:1415px;top:583px;width:105px;height:22px;background:#cccccc"></div><div class="t" style="left:1441.0px;top:586px;font-size:11.5px;line-height:16px;letter-spacing:-0.007px;color:#ababab;text-shadow:1px 1px 0 #f4f4f4;">Supprimer</div><div class="abs" style="left:1415px;top:613px;width:105px;height:22px;background:#cccccc"></div><div class="t" style="left:1441.5px;top:616px;font-size:11.5px;line-height:16px;letter-spacing:0.278px;color:#ababab;text-shadow:1px 1px 0 #f4f4f4;">Options...</div><div class="t" style="left:1114.5px;top:657px;font-size:11.5px;line-height:16px;letter-spacing:-0.172px;color:#111;-webkit-text-stroke:0.25px #111;">Macros dans :</div><div class="abs" style="left:1123.500px;top:671px;width:6px;height:1px;background:#111"></div><div class="abs" style="left:1194px;top:654px;width:212px;height:22px;background:#fff;border:1px solid #a6a6a6;box-sizing:border-box"></div><div class="abs" style="left:1388px;top:655px;width:17px;height:20px;background:#e6e6e6;border:1px solid #b0b0b0;box-sizing:border-box"></div><svg class="abs" style="left:1388px;top:655px" width="17" height="20"><path d="M4.500,8 l4,4 l4,-4" stroke="#444" stroke-width="1.300" fill="none"/></svg><div class="t" style="left:1198.4px;top:657px;font-size:11.5px;line-height:16px;letter-spacing:-0.476px;color:#111;-webkit-text-stroke:0.25px #111;">razz (1).xlsx</div><div class="t" style="left:1114.5px;top:678px;font-size:11.5px;line-height:16px;letter-spacing:0.088px;color:#111;-webkit-text-stroke:0.25px #111;">Description</div><div class="abs" style="left:1178px;top:685px;width:228px;height:1px;background:#e0e0e0"></div><div class="abs" style="left:1446px;top:741px;width:74px;height:22px;background:#e1e1e1;border:2px solid #0078d7;box-sizing:border-box"></div><div class="t" style="left:1462.5px;top:744px;font-size:11.5px;line-height:16px;letter-spacing:0.194px;color:#111;-webkit-text-stroke:0.25px #111;">Annuler</div>
</body></html>
